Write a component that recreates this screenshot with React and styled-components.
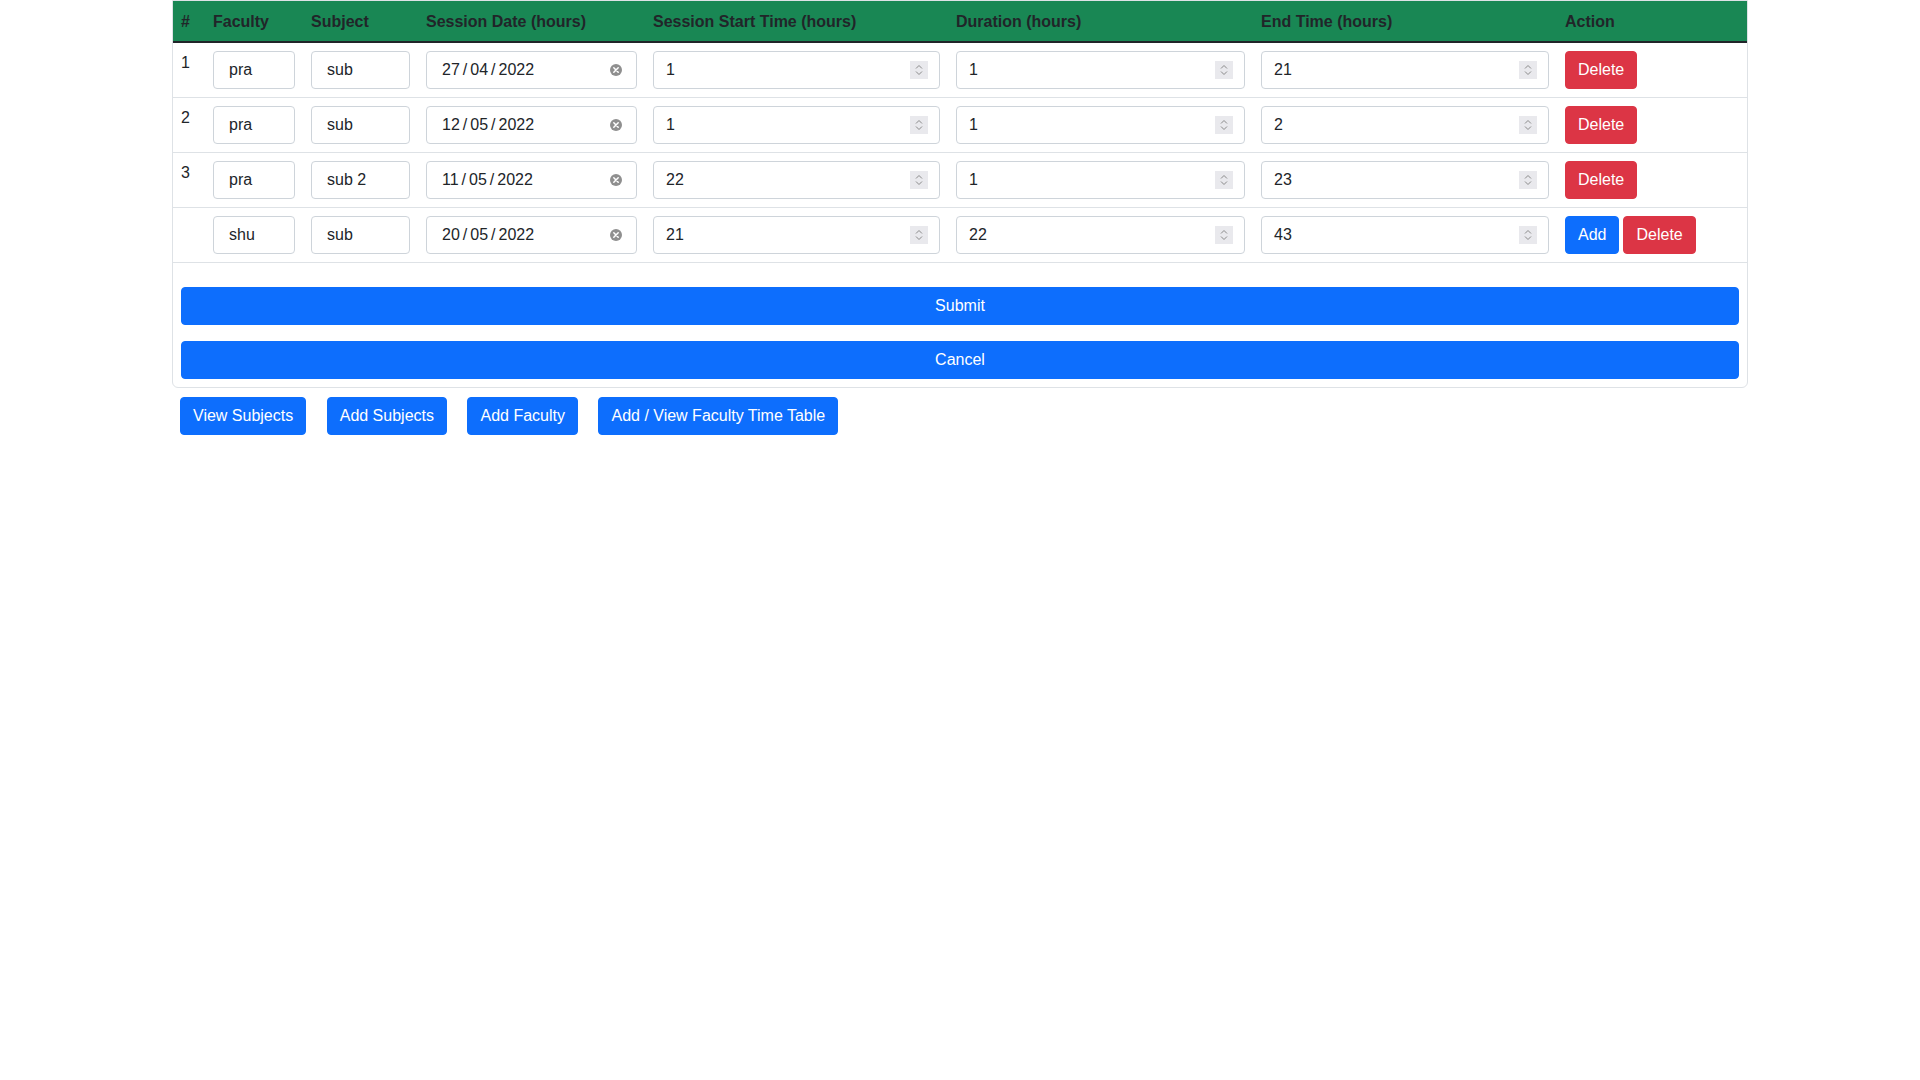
import styled, { createGlobalStyle } from 'styled-components';

const rows = [
  { no: '1', faculty: 'pra', subject: 'sub', date: ['27', '04', '2022'], start: '1', duration: '1', end: '21' },
  { no: '2', faculty: 'pra', subject: 'sub', date: ['12', '05', '2022'], start: '1', duration: '1', end: '2' },
  { no: '3', faculty: 'pra', subject: 'sub 2', date: ['11', '05', '2022'], start: '22', duration: '1', end: '23' },
  { no: '', faculty: 'shu', subject: 'sub', date: ['20', '05', '2022'], start: '21', duration: '22', end: '43', isNew: true },
];

const columns = [
  { label: '#', w: 16 },
  { label: 'Faculty', w: 82 },
  { label: 'Subject', w: 99 },
  { label: 'Session Date (hours)', w: 211 },
  { label: 'Session Start Time (hours)', w: 287 },
  { label: 'Duration (hours)', w: 289 },
  { label: 'End Time (hours)', w: 288 },
  { label: 'Action' },
];

const ClearIcon = () => (
  <svg width="12" height="12" viewBox="0 0 12 12">
    <circle cx="6" cy="6" r="6" fill="#8f8f8f" />
    <path d="M3.8 3.8 L8.2 8.2 M8.2 3.8 L3.8 8.2" stroke="#fff" strokeWidth="1.5" strokeLinecap="round" />
  </svg>
);

const SpinIcon = () => (
  <svg width="18" height="18" viewBox="0 0 18 18">
    <rect width="18" height="18" fill="#e9e9ed" />
    <path d="M6 7.5 L9 4.5 L12 7.5" fill="none" stroke="#8a8a8a" strokeWidth="1" />
    <path d="M6 10.5 L9 13.5 L12 10.5" fill="none" stroke="#8a8a8a" strokeWidth="1" />
  </svg>
);

const DateValue = ({ parts }) => (
  <span>
    {parts[0]}
    <Sep>/</Sep>
    {parts[1]}
    <Sep>/</Sep>
    {parts[2]}
  </span>
);

export default function App() {
  return (
    <>
      <GlobalStyle />
      <Page>
        <Card>
          <Table>
            <thead>
              <tr>
                {columns.map((c) => (
                  <Th key={c.label} $w={c.w}>
                    {c.label}
                  </Th>
                ))}
              </tr>
            </thead>
            <tbody>
              {rows.map((r, i) => (
                <tr key={i}>
                  <Td>{r.no}</Td>
                  <Td>
                    <Field $pl={15}>{r.faculty}</Field>
                  </Td>
                  <Td>
                    <Field $pl={15}>{r.subject}</Field>
                  </Td>
                  <Td>
                    <Field $pl={15} $pr={14}>
                      <DateValue parts={r.date} />
                      <ClearIcon />
                    </Field>
                  </Td>
                  <Td>
                    <Field $pl={12} $pr={11}>
                      {r.start}
                      <SpinIcon />
                    </Field>
                  </Td>
                  <Td>
                    <Field $pl={12} $pr={11}>
                      {r.duration}
                      <SpinIcon />
                    </Field>
                  </Td>
                  <Td>
                    <Field $pl={12} $pr={11}>
                      {r.end}
                      <SpinIcon />
                    </Field>
                  </Td>
                  <Td>
                    <ActionGroup>
                      {r.isNew && <Button $variant="primary">Add</Button>}
                      <Button $variant="danger">Delete</Button>
                    </ActionGroup>
                  </Td>
                </tr>
              ))}
            </tbody>
          </Table>
          <FormActions>
            <BlockButton>Submit</BlockButton>
            <BlockButton>Cancel</BlockButton>
          </FormActions>
        </Card>
        <NavRow>
          <Button $variant="primary">View Subjects</Button>
          <Button $variant="primary">Add Subjects</Button>
          <Button $variant="primary">Add Faculty</Button>
          <Button $variant="primary">Add / View Faculty Time Table</Button>
        </NavRow>
      </Page>
    </>
  );
}

const GlobalStyle = createGlobalStyle`
  body {
    margin: 0;
    background: #fff;
    color: #212529;
    font-family: "Liberation Sans", Arial, sans-serif;
    font-size: 16px;
    line-height: 24px;
  }
`;

const Page = styled.div`
  width: 1576px;
  margin: 0 auto;
`;

const Card = styled.div`
  border: 1px solid #dee2e6;
  border-radius: 0 0 6px 6px;
`;

const Table = styled.table`
  width: 100%;
  border-collapse: collapse;
  table-layout: fixed;
`;

const Th = styled.th`
  width: ${(props) => (props.$w ? `${props.$w}px` : 'auto')};
  padding: 9px 8px 7px;
  background-color: #198754;
  color: #212529;
  font-weight: bold;
  text-align: left;
  line-height: 24px;
  border-bottom: 2px solid #212529;
`;

const Td = styled.td`
  padding: 8px;
  vertical-align: top;
  border-bottom: 1px solid #dee2e6;
  line-height: 24px;
`;

const Field = styled.div`
  display: flex;
  align-items: center;
  justify-content: space-between;
  box-sizing: border-box;
  width: 100%;
  height: 38px;
  padding: 0 ${(props) => props.$pr || 12}px 0 ${(props) => props.$pl || 12}px;
  border: 1px solid #ced4da;
  border-radius: 4px;
  background: #fff;
  color: #212529;
  font-size: 16px;
  white-space: nowrap;

  svg {
    flex-shrink: 0;
  }
`;

const Sep = styled.span`
  margin: 0 3px;
`;

const ActionGroup = styled.div`
  display: flex;
  gap: 4px;
`;

const Button = styled.button`
  padding: 6px 12px;
  font-family: inherit;
  font-size: 16px;
  line-height: 24px;
  color: #fff;
  border-radius: 4px;
  cursor: pointer;
  background-color: ${(props) => (props.$variant === 'danger' ? '#dc3545' : '#0d6efd')};
  border: 1px solid ${(props) => (props.$variant === 'danger' ? '#dc3545' : '#0d6efd')};
`;

const FormActions = styled.div`
  display: grid;
  gap: 16px;
  padding: 24px 8px 8px;
`;

const BlockButton = styled(Button)`
  width: 100%;
  background-color: #0d6efd;
  border-color: #0d6efd;
`;

const NavRow = styled.div`
  display: flex;
  gap: 20.5px;
  padding: 9px 8px 0;
`;
